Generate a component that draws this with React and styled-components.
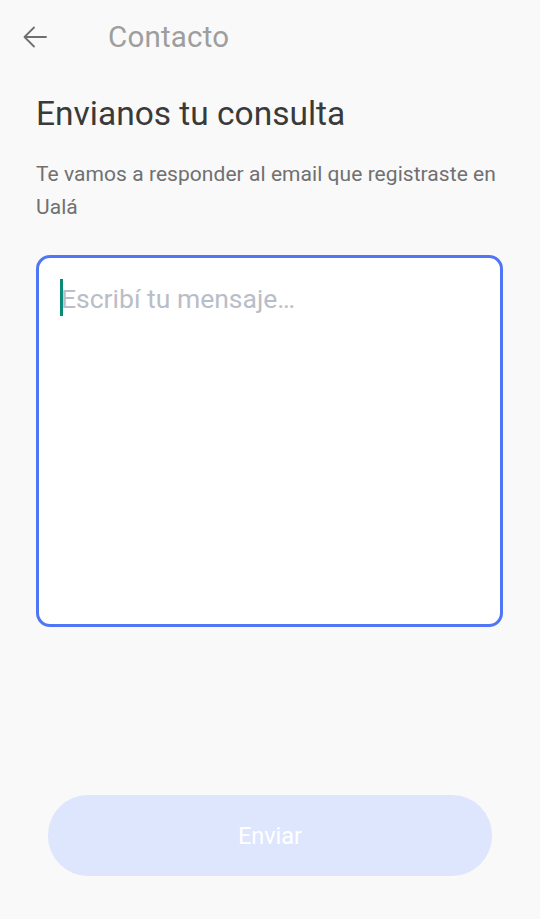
import React from "react";
import styled, { createGlobalStyle } from "styled-components";

const Global = createGlobalStyle`
  html, body { margin: 0; padding: 0; background: #f9f9f9; }
  body { font-family: Roboto, "Noto Sans", sans-serif; }
  * { box-sizing: border-box; }
`;

const Screen = styled.div`
  width: 540px;
  height: 919px;
  background: #f9f9f9;
  display: flex;
  flex-direction: column;
`;

const TopBar = styled.header`
  height: 74px;
  display: flex;
  align-items: center;
  padding-left: 23px;
`;

const BackButton = styled.button`
  width: 24px;
  height: 24px;
  border: none;
  background: none;
  padding: 0;
  display: flex;
  align-items: center;
  justify-content: center;
  color: #6f6f6f;
`;

const TopTitle = styled.h1`
  margin: 0 0 0 61px;
  font-size: 29.5px;
  font-weight: 400;
  color: #9e9e9e;
  letter-spacing: 0.2px;
`;

const Content = styled.main`
  flex: 1;
  display: flex;
  flex-direction: column;
  padding: 20px 36px 0 36px;
`;

const Heading = styled.h2`
  margin: 0;
  font-size: 33.5px;
  font-weight: 400;
  color: #3a3a3a;
  line-height: 40px;
`;

const Subtitle = styled.p`
  margin: 24px 0 0 0;
  font-size: 21px;
  line-height: 33px;
  color: #707070;
  letter-spacing: 0.05px;
`;

const MessageBox = styled.div`
  margin-top: 31px;
  width: 467px;
  height: 372px;
  background: #ffffff;
  border: 3px solid #5076f6;
  border-radius: 14px;
  padding: 21px 21px;
  display: flex;
  align-items: flex-start;
`;

const Caret = styled.span`
  width: 3px;
  height: 37px;
  background: #0b8a74;
  flex-shrink: 0;
`;

const Placeholder = styled.span`
  font-size: 26.5px;
  line-height: 40px;
  color: #b9bdc7;
  margin-left: -2px;
`;

const Footer = styled.div`
  padding: 0 48px 43px 48px;
`;

const SendButton = styled.button`
  width: 444px;
  height: 81px;
  border: none;
  border-radius: 40px;
  background: #dee6fd;
  color: #ffffff;
  font-family: Roboto, "Noto Sans", sans-serif;
  font-size: 23.5px;
  font-weight: 400;
  display: flex;
  align-items: center;
  justify-content: center;
`;

export default function App() {
  return (
    <Screen>
      <Global />
      <TopBar>
        <BackButton aria-label="Volver">
          <svg width="24" height="22" viewBox="0 0 24 22" fill="none" stroke="currentColor" strokeWidth="1.8" strokeLinecap="round" strokeLinejoin="round">
            <path d="M23 11H2" />
            <path d="M11 1.5L1.5 11l9.5 9.5" />
          </svg>
        </BackButton>
        <TopTitle>Contacto</TopTitle>
      </TopBar>
      <Content>
        <Heading>Envianos tu consulta</Heading>
        <Subtitle>Te vamos a responder al email que registraste en Ualá</Subtitle>
        <MessageBox>
          <Caret />
          <Placeholder>Escribí tu mensaje…</Placeholder>
        </MessageBox>
      </Content>
      <Footer>
        <SendButton>Enviar</SendButton>
      </Footer>
    </Screen>
  );
}
